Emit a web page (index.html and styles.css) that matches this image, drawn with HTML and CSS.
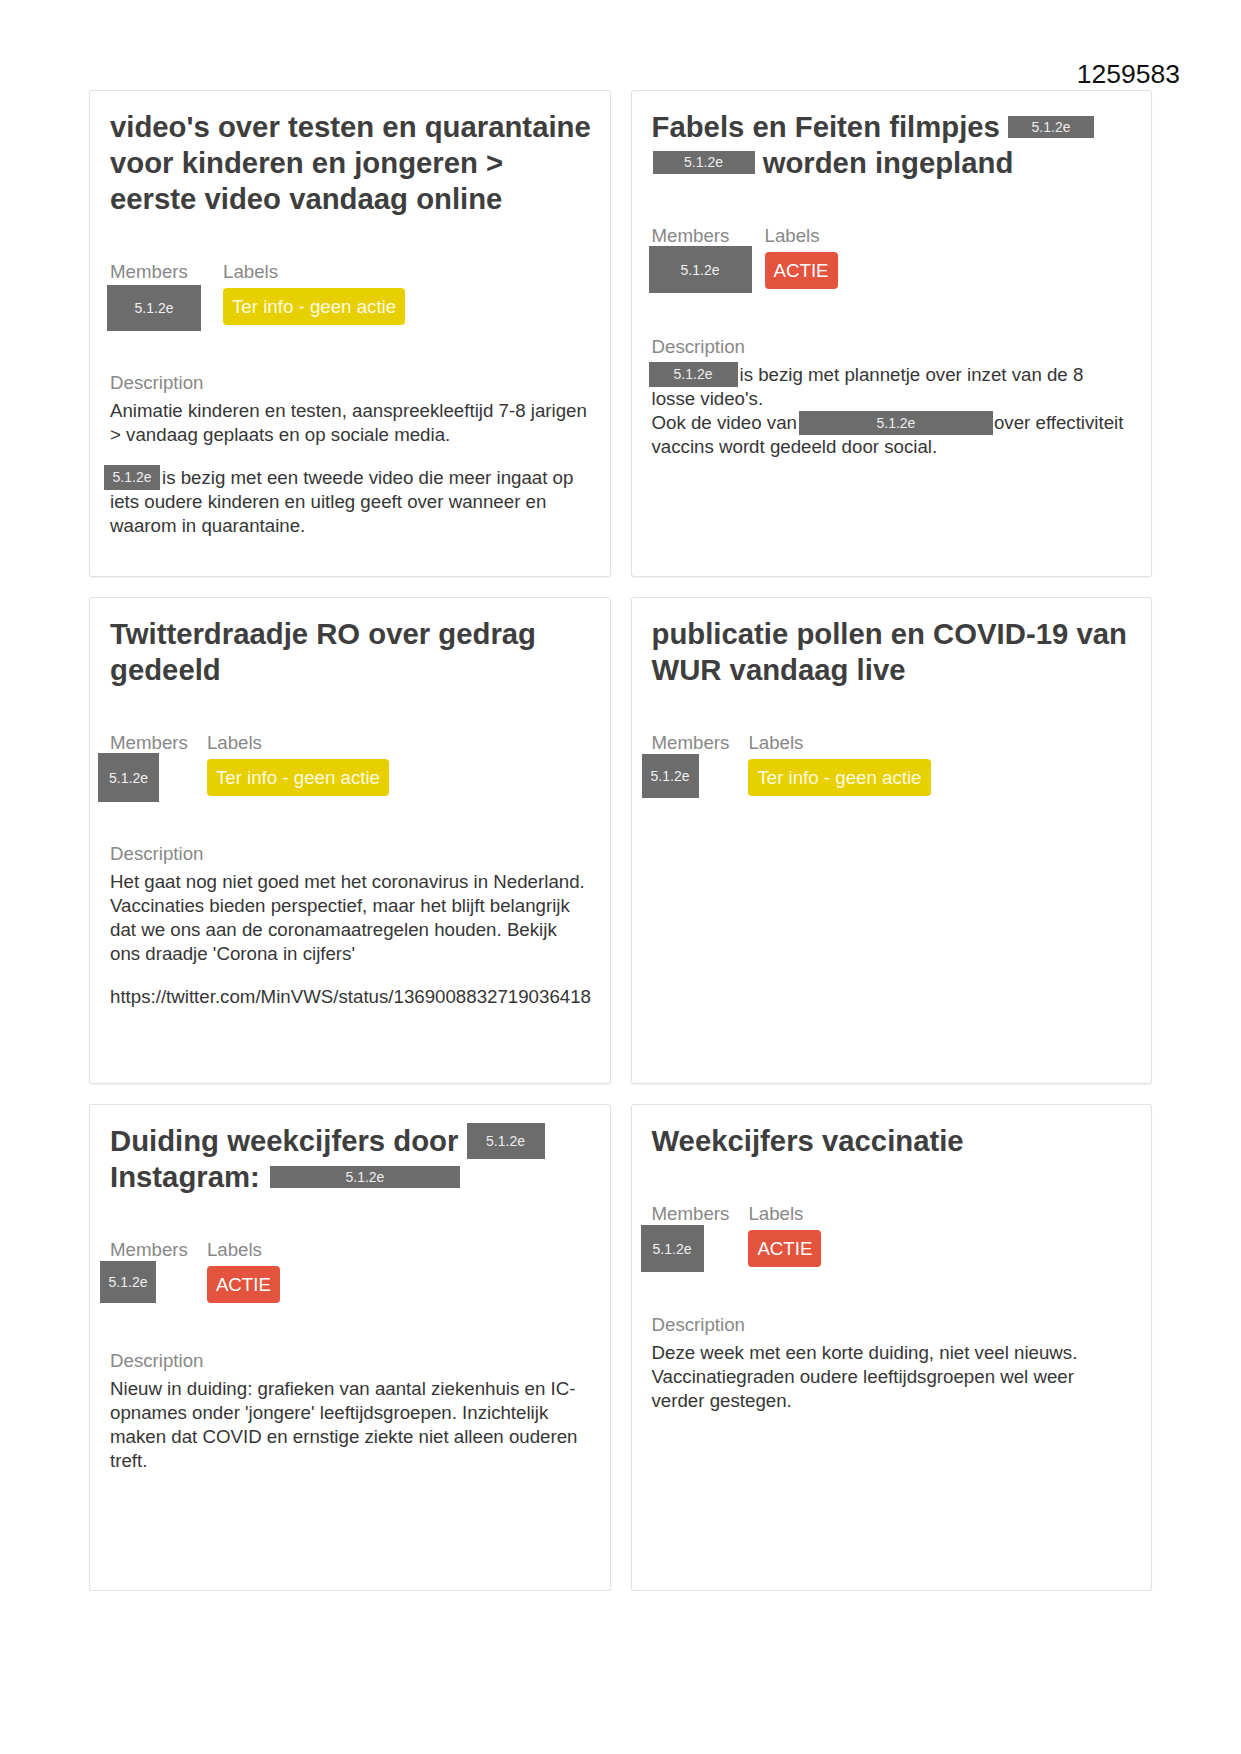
FILE: index.html
```html
<!DOCTYPE html>
<html lang="nl">
<head>
<meta charset="utf-8">
<title>1259583</title>
<link rel="stylesheet" href="styles.css">
</head>
<body>
<div class="page">
  <div class="doc-number">1259583</div>
  <div class="grid">

    <div class="card">
      <h2 class="title">video's over testen en quarantaine<br>voor kinderen en jongeren &gt;<br>eerste video vandaag online</h2>
      <div class="meta">
        <div class="col col-wide">
          <div class="meta-label">Members</div>
          <div class="member m1">5.1.2e</div>
        </div>
        <div class="col">
          <div class="meta-label">Labels</div>
          <span class="pill pill-yellow">Ter info - geen actie</span>
        </div>
      </div>
      <div class="meta-label">Description</div>
      <div class="desc">
        <p>Animatie kinderen en testen, aanspreekleeftijd 7-8 jarigen<br>&gt; vandaag geplaats en op sociale media.</p>
        <p><span class="red-inline ri1">5.1.2e</span>is bezig met een tweede video die meer ingaat op<br>iets oudere kinderen en uitleg geeft over wanneer en<br>waarom in quarantaine.</p>
      </div>
    </div>

    <div class="card">
      <h2 class="title">Fabels en Feiten filmpjes <span class="red-title rt1">5.1.2e</span><br><span class="red-title rt2">5.1.2e</span> worden ingepland</h2>
      <div class="meta">
        <div class="col col-wide">
          <div class="meta-label">Members</div>
          <div class="member m2">5.1.2e</div>
        </div>
        <div class="col">
          <div class="meta-label">Labels</div>
          <span class="pill pill-red">ACTIE</span>
        </div>
      </div>
      <div class="meta-label">Description</div>
      <div class="desc">
        <p><span class="red-inline ri2">5.1.2e</span>is bezig met plannetje over inzet van de 8<br>losse video's.<br>Ook de video van<span class="red-inline ri3">5.1.2e</span>over effectiviteit<br>vaccins wordt gedeeld door social.</p>
      </div>
    </div>

    <div class="card">
      <h2 class="title">Twitterdraadje RO over gedrag<br>gedeeld</h2>
      <div class="meta">
        <div class="col">
          <div class="meta-label">Members</div>
          <div class="member m3">5.1.2e</div>
        </div>
        <div class="col">
          <div class="meta-label">Labels</div>
          <span class="pill pill-yellow">Ter info - geen actie</span>
        </div>
      </div>
      <div class="meta-label">Description</div>
      <div class="desc">
        <p>Het gaat nog niet goed met het coronavirus in Nederland.<br>Vaccinaties bieden perspectief, maar het blijft belangrijk<br>dat we ons aan de coronamaatregelen houden. Bekijk<br>ons draadje 'Corona in cijfers'</p>
        <p class="url">https://twitter.com/MinVWS/status/1369008832719036418</p>
      </div>
    </div>

    <div class="card">
      <h2 class="title">publicatie pollen en COVID-19 van<br>WUR vandaag live</h2>
      <div class="meta">
        <div class="col">
          <div class="meta-label">Members</div>
          <div class="member m4">5.1.2e</div>
        </div>
        <div class="col">
          <div class="meta-label">Labels</div>
          <span class="pill pill-yellow">Ter info - geen actie</span>
        </div>
      </div>
    </div>

    <div class="card">
      <h2 class="title">Duiding weekcijfers door <span class="red-title rt3">5.1.2e</span><br>Instagram: <span class="red-title rt4">5.1.2e</span></h2>
      <div class="meta">
        <div class="col">
          <div class="meta-label">Members</div>
          <div class="member m5">5.1.2e</div>
        </div>
        <div class="col">
          <div class="meta-label">Labels</div>
          <span class="pill pill-red">ACTIE</span>
        </div>
      </div>
      <div class="meta-label">Description</div>
      <div class="desc">
        <p>Nieuw in duiding: grafieken van aantal ziekenhuis en IC-<br>opnames onder 'jongere' leeftijdsgroepen. Inzichtelijk<br>maken dat COVID en ernstige ziekte niet alleen ouderen<br>treft.</p>
      </div>
    </div>

    <div class="card">
      <h2 class="title">Weekcijfers vaccinatie</h2>
      <div class="meta">
        <div class="col">
          <div class="meta-label">Members</div>
          <div class="member m6">5.1.2e</div>
        </div>
        <div class="col">
          <div class="meta-label">Labels</div>
          <span class="pill pill-red">ACTIE</span>
        </div>
      </div>
      <div class="meta-label">Description</div>
      <div class="desc">
        <p>Deze week met een korte duiding, niet veel nieuws.<br>Vaccinatiegraden oudere leeftijdsgroepen wel weer<br>verder gestegen.</p>
      </div>
    </div>

  </div>
</div>
</body>
</html>
```

FILE: styles.css
```css
html, body {
  margin: 0;
  padding: 0;
  background: #ffffff;
}

body {
  font-family: "Liberation Sans", Arial, Helvetica, sans-serif;
  color: #333333;
}

.page {
  width: 1241px;
  padding-top: 61px;
  box-sizing: border-box;
}

.doc-number {
  font-size: 26.5px;
  line-height: 27px;
  height: 27px;
  text-align: right;
  padding-right: 61px;
  margin-bottom: 2px;
  color: #111111;
}

.grid {
  width: 1063px;
  margin: 0 auto;
  display: grid;
  grid-template-columns: 1fr 1fr;
  grid-auto-rows: 487px;
  column-gap: 20px;
  row-gap: 20px;
}

.card {
  background: #ffffff;
  border: 1px solid #e1e1e1;
  border-radius: 3px;
  box-shadow: 0 1px 2px rgba(0, 0, 0, 0.06);
  padding: 18px 14px 0 20px;
  box-sizing: border-box;
  overflow: visible;
}

.title {
  margin: 0 0 43px 0;
  font-size: 29.3px;
  line-height: 36px;
  font-weight: bold;
  color: #3e3e3e;
  white-space: nowrap;
}

.meta {
  display: flex;
  gap: 19px;
  height: 65px;
  margin-bottom: 46px;
}

.col {
  display: flex;
  flex-direction: column;
  align-items: flex-start;
}

.col-wide {
  width: 94px;
  flex-shrink: 0;
}

.meta-label {
  font-size: 18.7px;
  line-height: 24px;
  color: #888888;
  white-space: nowrap;
}

.member {
  background: #6c6c6c;
  color: #f0f0f0;
  font-size: 14px;
  display: flex;
  align-items: center;
  justify-content: center;
  box-sizing: border-box;
  flex-shrink: 0;
}

.m1 { width: 94px; height: 46px; margin: 1px 0 0 -3px; }
.m2 { width: 103px; height: 47px; margin: -2px 0 0 -3px; }
.m3 { width: 61px; height: 49px; margin: -2px 0 0 -12px; }
.m4 { width: 57px; height: 44px; margin: -1px 0 0 -10px; }
.m5 { width: 56px; height: 42px; margin: -1px 0 0 -10px; }
.m6 { width: 63px; height: 47px; margin: -1px 0 0 -11px; }

.pill {
  display: inline-block;
  margin-top: 4px;
  height: 37px;
  line-height: 37px;
  padding: 0 9px;
  border-radius: 4px;
  font-size: 18.7px;
  color: #ffffff;
  white-space: nowrap;
}

.pill-yellow { background: #e8cf00; color: #fffbe0; }
.pill-red { background: #e4533e; }

.desc {
  margin-top: 4px;
  font-size: 18.7px;
  line-height: 24px;
  color: #363636;
}

.desc p {
  margin: 0 0 18.5px 0;
  white-space: nowrap;
}

.red-title,
.red-inline {
  display: inline-block;
  background: #6c6c6c;
  color: #eeeeee;
  font-size: 14px;
  font-weight: normal;
  text-align: center;
  vertical-align: top;
}

.rt1 { width: 86px; height: 22px; line-height: 22px; margin-top: 7px; }
.rt2 { width: 102px; height: 23px; line-height: 23px; margin-top: 6px; margin-left: 1px; }
.rt3 { width: 78px; height: 36px; line-height: 36px; }
.rt4 { width: 190px; height: 22px; line-height: 22px; margin-top: 7px; margin-left: 2px; }

.ri1 { width: 56px; height: 25px; line-height: 25px; margin: -1px 2px 0 -6px; }
.ri2 { width: 89px; height: 25px; line-height: 25px; margin: -1px 2px -1px -3px; }
.ri3 { width: 194px; height: 24px; line-height: 24px; margin: 0 1px 0 2px; }

.url {
  white-space: nowrap;
}
```
